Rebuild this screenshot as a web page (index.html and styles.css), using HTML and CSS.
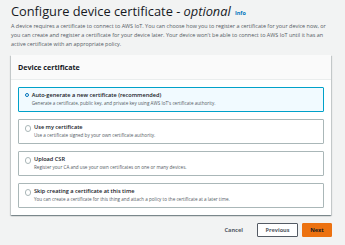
FILE: index.html
```html
<!DOCTYPE html>
<html>
<head>
<meta charset="utf-8">
<link rel="stylesheet" href="styles.css">
</head>
<body>
<div class="page">
  <h1 class="title">Configure device certificate - <em>optional</em> <a class="info">Info</a></h1>
  <p class="desc">A device requires a certificate to connect to AWS IoT. You can choose how you to register a certificate for your device now, or you can create and register a certificate for your device later. Your device won't be able to connect to AWS IoT until it has an active certificate with an appropriate policy.</p>
  <div class="card">
    <div class="card-head">Device certificate</div>
    <div class="card-body">
      <div class="opt selected">
        <span class="radio on"></span>
        <div class="opt-text">
          <div class="opt-label">Auto-generate a new certificate (recommended)</div>
          <div class="opt-desc">Generate a certificate, public key, and private key using AWS IoT's certificate authority.</div>
        </div>
      </div>
      <div class="opt">
        <span class="radio"></span>
        <div class="opt-text">
          <div class="opt-label">Use my certificate</div>
          <div class="opt-desc">Use a certificate signed by your own certificate authority.</div>
        </div>
      </div>
      <div class="opt">
        <span class="radio"></span>
        <div class="opt-text">
          <div class="opt-label">Upload CSR</div>
          <div class="opt-desc">Register your CA and use your own certificates on one or many devices.</div>
        </div>
      </div>
      <div class="opt">
        <span class="radio"></span>
        <div class="opt-text">
          <div class="opt-label">Skip creating a certificate at this time</div>
          <div class="opt-desc">You can create a certificate for this thing and attach a policy to the certificate at a later time.</div>
        </div>
      </div>
    </div>
  </div>
  <div class="actions">
    <button class="btn link">Cancel</button>
    <button class="btn normal">Previous</button>
    <button class="btn primary">Next</button>
  </div>
</div>
</body>
</html>
```
FILE: styles.css
```css
html, body {
  margin: 0;
  padding: 0;
  background: #f2f3f3;
}
body {
  font-family: "Open Sans", "Noto Sans", sans-serif;
  color: #16191f;
}
.page {
  padding: 3px 14px 0 11px;
}
.title {
  margin: 0;
  font-size: 12.8px;
  line-height: 16px;
  font-weight: 400;
}
.title em {
  font-style: italic;
}
.info {
  font-size: 5.4px;
  font-weight: 700;
  color: #0073bb;
  vertical-align: 1px;
  margin-left: 1px;
}
.desc {
  margin: 1px 0 0 0;
  font-size: 5.45px;
  line-height: 9px;
  color: #545b64;
}
.card {
  margin-top: 6px;
  background: #fff;
  box-shadow: 0 1px 1px 0 rgba(0, 28, 36, 0.3), 1px 1px 1px 0 rgba(0, 28, 36, 0.15), -1px 1px 1px 0 rgba(0, 28, 36, 0.15);
}
.card-head {
  background: #fafafa;
  border-bottom: 1px solid #eaeded;
  height: 24px;
  line-height: 24px;
  padding: 0 7px;
  font-size: 7.1px;
  font-weight: 700;
}
.card-body {
  padding: 7px;
  display: flex;
  flex-direction: column;
  gap: 7px;
}
.opt {
  box-sizing: border-box;
  display: flex;
  align-items: flex-start;
  gap: 3px;
  border: 1px solid #aab7b8;
  border-radius: 1px;
  padding: 3px 6px 0 5.5px;
  height: 25px;
}
.opt.selected {
  border-color: #00a1c9;
  background: #f1faff;
}
.radio {
  flex: none;
  width: 4.5px;
  height: 4.5px;
  border-radius: 50%;
  border: 0.6px solid #aab7b8;
  background: #fff;
  margin-top: 2.2px;
}
.radio.on {
  border: 1.6px solid #0073bb;
  width: 2.2px;
  height: 2.2px;
}
.opt-label {
  font-size: 5.6px;
  line-height: 9px;
  font-weight: 600;
}
.opt-desc {
  font-size: 4.6px;
  line-height: 7px;
  color: #545b64;
}
.actions {
  display: flex;
  justify-content: flex-end;
  align-items: center;
  gap: 4px;
  margin-top: 8px;
  margin-right: -1px;
}
.btn {
  font-family: inherit;
  font-size: 5.6px;
  font-weight: 700;
  height: 14px;
  padding: 0 4px;
  border-radius: 1px;
  cursor: pointer;
}
.btn.link {
  background: none;
  border: none;
  color: #545b64;
  margin-right: 6px;
}
.btn.normal {
  background: #fff;
  border: 1px solid #545b64;
  color: #545b64;
  width: 41px;
}
.btn.primary {
  background: #ec7211;
  border: 1px solid #ec7211;
  color: #16191f;
  width: 30px;
}
```
